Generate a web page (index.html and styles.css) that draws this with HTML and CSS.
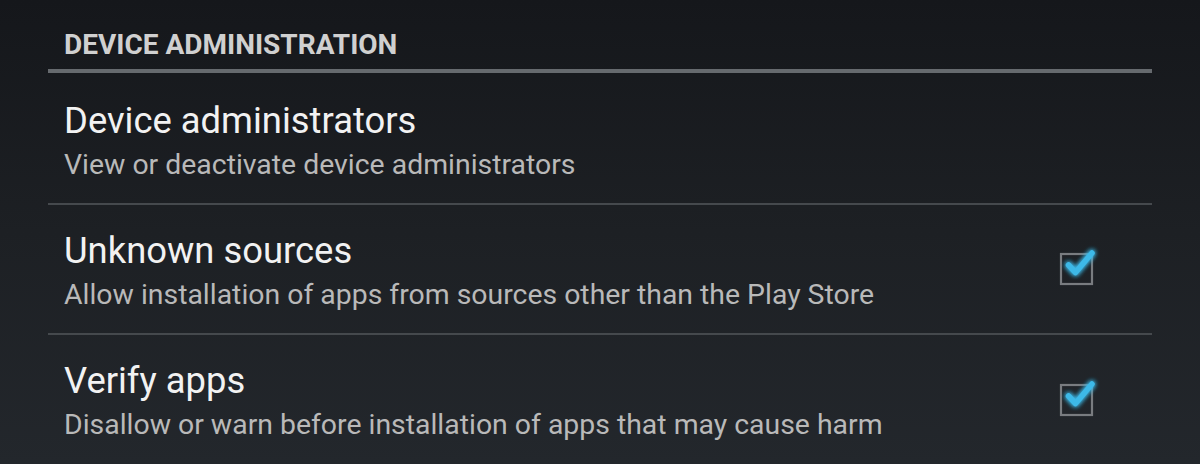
FILE: index.html
```html
<!DOCTYPE html>
<html>
<head>
<meta charset="utf-8">
<link rel="stylesheet" href="styles.css">
</head>
<body>
<div class="screen">
  <div class="section-header">DEVICE ADMINISTRATION</div>
  <div class="item first">
    <div class="text">
      <div class="title">Device administrators</div>
      <div class="summary">View or deactivate device administrators</div>
    </div>
  </div>
  <div class="item">
    <div class="text">
      <div class="title">Unknown sources</div>
      <div class="summary">Allow installation of apps from sources other than the Play Store</div>
    </div>
    <svg class="check" width="48" height="48" viewBox="0 0 48 48">
      <defs>
        <filter id="glow1" x="-50%" y="-50%" width="200%" height="200%">
          <feGaussianBlur stdDeviation="2.4" result="b"/>
          <feMerge><feMergeNode in="b"/><feMergeNode in="b"/><feMergeNode in="SourceGraphic"/></feMerge>
        </filter>
      </defs>
      <rect x="9" y="9" width="31" height="30" fill="none" stroke="#797c80" stroke-width="2.2"/>
      <path d="M16.5 20 L23.5 27.5 L40 8" fill="none" stroke="#3cb9e8" stroke-width="5.5" stroke-linecap="round" stroke-linejoin="round" filter="url(#glow1)"/>
    </svg>
  </div>
  <div class="item">
    <div class="text">
      <div class="title">Verify apps</div>
      <div class="summary">Disallow or warn before installation of apps that may cause harm</div>
    </div>
    <svg class="check" width="48" height="48" viewBox="0 0 48 48">
      <defs>
        <filter id="glow2" x="-50%" y="-50%" width="200%" height="200%">
          <feGaussianBlur stdDeviation="2.4" result="b"/>
          <feMerge><feMergeNode in="b"/><feMergeNode in="b"/><feMergeNode in="SourceGraphic"/></feMerge>
        </filter>
      </defs>
      <rect x="9" y="9" width="31" height="30" fill="none" stroke="#797c80" stroke-width="2.2"/>
      <path d="M16.5 20 L23.5 27.5 L40 8" fill="none" stroke="#3cb9e8" stroke-width="5.5" stroke-linecap="round" stroke-linejoin="round" filter="url(#glow2)"/>
    </svg>
  </div>
</div>
</body>
</html>
```

FILE: styles.css
```css
html, body {
  margin: 0;
  padding: 0;
}
body {
  width: 1200px;
  height: 464px;
  overflow: hidden;
  background: linear-gradient(to bottom, #15171b 0%, #1d2024 50%, #23272c 100%);
  font-family: Roboto, "Noto Sans", sans-serif;
}
.screen {
  display: flex;
  flex-direction: column;
  padding: 0 48px;
}
.section-header {
  height: 73px;
  box-sizing: border-box;
  padding: 29px 0 0 16px;
  font-size: 28px;
  line-height: 32px;
  font-weight: bold;
  color: #d0d0d0;
  border-bottom: 4px solid #666a6e;
}
.item {
  display: flex;
  align-items: center;
  height: 130px;
  box-sizing: border-box;
  border-bottom: 2px solid #45494d;
  padding: 0 52px 0 16px;
}
.item.first {
  height: 132px;
}
.item:last-child {
  border-bottom: none;
}
.text {
  flex: 1;
  display: flex;
  flex-direction: column;
  align-self: flex-start;
  padding-top: 25px;
}
.item.first .text {
  padding-top: 27px;
}
.title {
  font-size: 36.4px;
  line-height: 42px;
  color: #f2f2f2;
}
.summary {
  margin-top: 5px;
  font-size: 28.4px;
  line-height: 36px;
  color: #b9b9b9;
}
.check {
  flex: none;
  display: block;
}
```
